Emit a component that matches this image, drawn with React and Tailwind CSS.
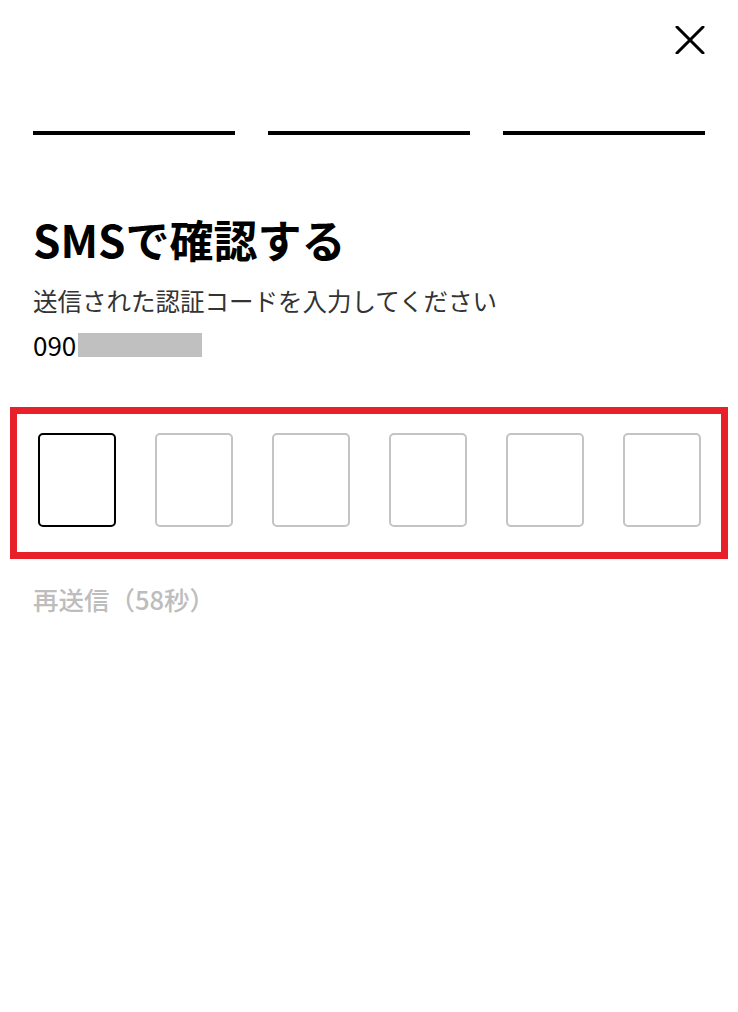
import { useState } from "react";

// SMS verification screen: step bars, heading, and a six-digit code row
export default function App() {
  const [code] = useState(["", "", "", "", "", ""]);
  const activeIndex = 0;

  return (
    <div
      className="min-h-screen w-full bg-white"
      style={{ fontFamily: '"Noto Sans CJK JP", "Noto Sans", sans-serif' }}
    >
      {/* close button */}
      <div className="flex justify-end px-[33px] pt-[25px]">
        <button className="w-[30px] h-[30px] flex items-center justify-center">
          <svg width="30" height="28" viewBox="0 0 30 28" fill="none">
            <path
              d="M2 1 L28 27 M28 1 L2 27"
              stroke="#000"
              strokeWidth="3"
              strokeLinecap="round"
            />
          </svg>
        </button>
      </div>

      {/* progress bars */}
      <div className="flex gap-[33px] px-[33px] mt-[76px]">
        <div className="flex-1 h-[4px] bg-black" />
        <div className="flex-1 h-[4px] bg-black" />
        <div className="flex-1 h-[4px] bg-black" />
      </div>

      <div className="px-[33px] mt-[76px]">
        <h1 className="text-[44px] leading-[56px] font-bold text-black">
          SMSで確認する
        </h1>
        <p className="mt-[18px] text-[24.5px] leading-[32px] text-[#333]">
          送信された認証コードを入力してください
        </p>
        <div className="mt-[12px] flex items-center h-[32px]">
          <span className="text-[26px] leading-[32px] text-black">090</span>
          <span className="ml-[2px] w-[124px] h-[24px] bg-[#c0c0c0]" />
        </div>
      </div>

      {/* code inputs */}
      <div className="mx-[10px] mt-[46px] border-[7px] border-[#e8202a] pt-[19px] pb-[25px] pl-[21px] pr-[20px]">
        <div className="flex justify-between">
          {code.map((digit, i) => (
            <div
              key={i}
              className={`w-[78px] h-[94px] rounded-[5px] border-2 flex items-center justify-center text-[36px] ${
                i === activeIndex ? "border-black" : "border-[#c4c4c4]"
              }`}
            >
              {digit}
            </div>
          ))}
        </div>
      </div>

      <p className="px-[33px] mt-[24px] text-[25.5px] leading-[32px] font-medium text-[#bdbdbd]">
        再送信（58秒）
      </p>
    </div>
  );
}
